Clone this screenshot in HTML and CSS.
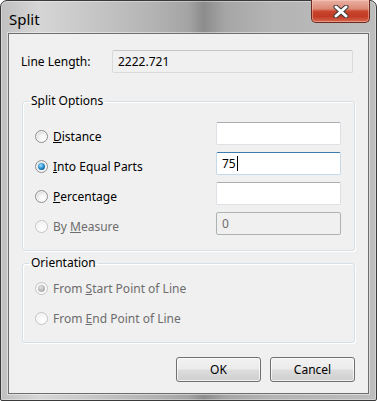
FILE: index.html
```html
<!DOCTYPE html>
<html lang="en">
<head>
    <meta charset="UTF-8">
    <title>Split</title>
    <link rel="stylesheet" href="styles.css">
</head>
<body>
    <div class="window">
        <div class="titlebar">
            <span class="title">Split</span>
            <button class="close" type="button" aria-label="Close">
                <svg width="16" height="13" viewBox="0 0 16 13">
                    <path d="M3 2 L13 11 M13 2 L3 11" stroke="#3b3b3b" stroke-width="5" stroke-linecap="round"/>
                    <path d="M3 2 L13 11 M13 2 L3 11" stroke="#ffffff" stroke-width="3" stroke-linecap="round"/>
                </svg>
            </button>
        </div>
        <div class="client">
            <div class="line-row">
                <span class="line-label">Line Length:</span>
                <div class="textbox readonly">2222.721</div>
            </div>

            <fieldset class="group">
                <legend>Split Options</legend>
                <div class="opt-row">
                    <label class="radio"><span class="dot"></span><span><u>D</u>istance</span></label>
                    <div class="textbox"></div>
                </div>
                <div class="opt-row">
                    <label class="radio"><span class="dot checked"></span><span><u>I</u>nto Equal Parts</span></label>
                    <div class="textbox focused">75<span class="caret"></span></div>
                </div>
                <div class="opt-row">
                    <label class="radio"><span class="dot"></span><span><u>P</u>ercentage</span></label>
                    <div class="textbox"></div>
                </div>
                <div class="opt-row">
                    <label class="radio disabled"><span class="dot"></span><span>By <u>M</u>easure</span></label>
                    <div class="textbox disabled">0</div>
                </div>
            </fieldset>

            <fieldset class="group orient">
                <legend>Orientation</legend>
                <div class="or-row">
                    <label class="radio disabled"><span class="dot checked"></span><span>From <u>S</u>tart Point of Line</span></label>
                </div>
                <div class="or-row">
                    <label class="radio disabled"><span class="dot"></span><span>From <u>E</u>nd Point of Line</span></label>
                </div>
            </fieldset>

            <div class="buttons">
                <button class="btn" type="button">OK</button>
                <button class="btn" type="button">Cancel</button>
            </div>
        </div>
    </div>
</body>
</html>
```

FILE: styles.css
```css
* {
    box-sizing: border-box;
}
body {
    margin: 0;
    font-family: "Noto Sans", "Open Sans", sans-serif;
    font-size: 12px;
    color: #000;
    background: #fff;
}
.window {
    width: 377px;
    height: 401px;
    border: 1px solid #3a3a3a;
    border-radius: 7px 7px 2px 2px;
    background: linear-gradient(90deg, #c0c0c0 0%, #d6d6d6 10%, #cbcbcb 20%, #b4b4b4 40%, #a4a4a4 50%, #8c8c8c 54%, #a6a6a6 60%, #b4b4b4 72%, #bdbdbd 100%);
    box-shadow: inset 0 0 0 1px rgba(255, 255, 255, 0.35);
    display: flex;
    flex-direction: column;
}
.titlebar {
    height: 32px;
    display: flex;
    justify-content: space-between;
    align-items: flex-start;
    padding: 0 6px 0 8px;
}
.title {
    font-size: 15px;
    line-height: 15px;
    margin-top: 11px;
}
.close {
    width: 59px;
    height: 23px;
    margin-top: -1px;
    border: 1px solid #6e2a1e;
    border-top: none;
    border-radius: 0 0 5px 5px;
    background: linear-gradient(180deg, #e9b2a4 0%, #dc8a76 40%, #c9452d 52%, #c23a24 75%, #d66a4f 100%);
    box-shadow: inset 0 0 0 1px rgba(255, 210, 200, 0.45);
    display: flex;
    align-items: center;
    justify-content: center;
    padding: 0;
}
.client {
    margin: 0 7px;
    height: 361px;
    background: #f0f0f0;
    border: 1px solid #6e6e6e;
    box-shadow: 0 0 0 1px rgba(255, 255, 255, 0.45);
    padding: 16px 13px 0 13px;
}
.line-row {
    display: flex;
    align-items: center;
}
.line-label {
    width: 91px;
    margin-left: -1px;
}
.textbox {
    height: 23px;
    background: #fff;
    border: 1px solid #dde1e6;
    border-top-color: #abadb3;
    border-radius: 2px;
    padding: 0 5px;
    line-height: 21px;
    font-size: 12px;
}
.textbox.readonly {
    width: 241px;
    background: #f0f0f0;
    border-color: #d9dadc;
    border-top-color: #c5c6c9;
}
.textbox.focused {
    border-color: #c5dbec;
    border-top-color: #3d7bad;
    display: flex;
    align-items: center;
}
.caret {
    width: 1px;
    height: 15px;
    background: #000;
    margin-left: 1px;
}
.textbox.disabled {
    background: #f0f0f0;
    border-color: #adb2b5;
    color: #6d6d6d;
}
.group {
    margin: 20px 0 0 0;
    padding: 13px 0 8px 12px;
    border: 1px solid #d5dfe5;
    border-radius: 3px;
    box-shadow: inset 1px 1px 0 #fff, 1px 1px 0 #fff;
    width: 333px;
}
.group legend {
    padding: 0 2px;
    margin-left: -6px;
    line-height: 16px;
}
.opt-row {
    height: 30px;
    display: flex;
    justify-content: space-between;
    align-items: flex-start;
    padding-right: 13px;
}
.opt-row .textbox {
    width: 125px;
}
.opt-row .radio {
    margin-top: 6px;
}
.radio {
    display: flex;
    align-items: center;
    gap: 5px;
    line-height: 17px;
}
.radio.disabled {
    color: #6d6d6d;
}
.dot {
    width: 13px;
    height: 13px;
    border-radius: 50%;
    border: 1px solid #8e8f8f;
    background: radial-gradient(circle at 60% 65%, #ffffff 0%, #f4f4f4 35%, #d4d4d4 80%, #c9c9c9 100%);
    box-shadow: inset 0 0 0 1px rgba(255, 255, 255, 0.7);
    display: flex;
    align-items: center;
    justify-content: center;
}
.dot.checked::after {
    content: "";
    width: 7px;
    height: 7px;
    border-radius: 50%;
    background: radial-gradient(circle at 40% 35%, #a5e0fb 0%, #2f95d4 45%, #0d5a98 75%, #1c3d6a 100%);
}
.disabled .dot {
    border-color: #c2c4c6;
    background: radial-gradient(circle at 60% 65%, #ffffff 0%, #f6f6f6 45%, #e6e6e6 100%);
}
.disabled .dot.checked::after {
    background: radial-gradient(circle at 40% 35%, #e4e4e4 0%, #b9b9b9 50%, #9a9a9a 100%);
}
.group.orient {
    margin-top: 4px;
    padding: 2px 0 9px 12px;
}
.or-row {
    height: 30px;
    display: flex;
    align-items: center;
}
.buttons {
    display: flex;
    justify-content: flex-end;
    gap: 9px;
    margin-top: 14px;
    width: 333px;
}
.btn {
    width: 85px;
    height: 25px;
    border: 1px solid #707070;
    border-radius: 3px;
    background: linear-gradient(180deg, #f2f2f2 0%, #ebebeb 48%, #dddddd 52%, #cfcfcf 100%);
    box-shadow: inset 0 0 0 1px rgba(255, 255, 255, 0.7);
    font-family: inherit;
    font-size: 12px;
    color: #000;
    padding: 0;
}
```
